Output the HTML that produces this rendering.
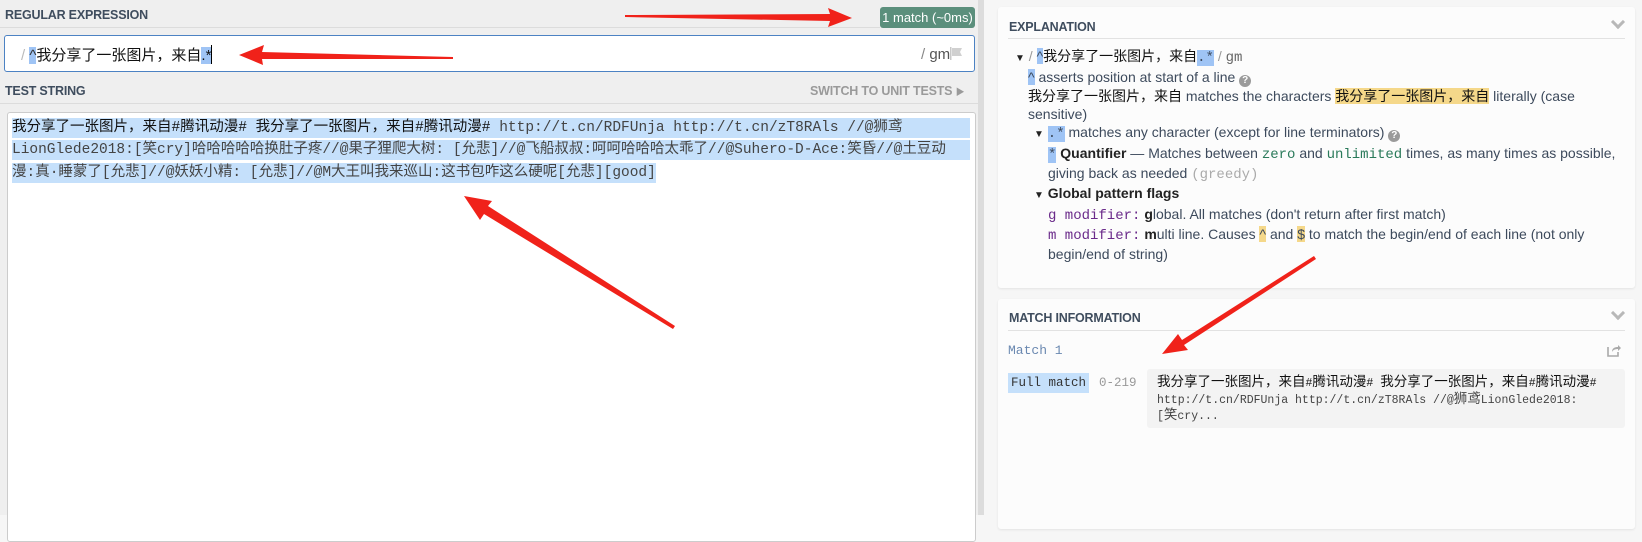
<!DOCTYPE html>
<html><head><meta charset="utf-8">
<style>
*{margin:0;padding:0;box-sizing:border-box}
body{width:1642px;height:515px;overflow:hidden;position:relative;background:#f6f6f6;font-family:"Liberation Sans","Noto Sans CJK SC",sans-serif}
.abs{position:absolute;white-space:nowrap}
.left{position:absolute;left:0;top:0;width:984px;height:515px;background:#efefef;border-right:6px solid #dcdcdc}
.lbl{font-weight:bold;font-size:12.5px;color:#3f4d5e;letter-spacing:-0.2px}
.mono{font-family:"Liberation Mono","Noto Sans CJK SC",monospace}
.hl{background:#c5e0fb}
.card{position:absolute;background:#fcfcfc;border-radius:3px;box-shadow:0 1px 2px rgba(0,0,0,.08)}
.ex{font-size:14px;color:#3d4a5c;line-height:18px}
.cj{color:#111}
.blue{background:#9fc4f5}
.yel{background:#f5d88a}
.q{display:inline-block;width:12px;height:12px;border-radius:50%;background:#9a9a9a;color:#fff;font-size:10px;line-height:12px;text-align:center;font-weight:bold;vertical-align:-1px}
.chev{position:absolute;width:10px;height:10px;border-right:3px solid #b8b8b8;border-bottom:3px solid #b8b8b8;transform:rotate(45deg)}
.c{font-size:13.5px}
</style></head><body>
<div class="left"></div>
<div class="abs lbl" style="left:5px;top:8px">REGULAR EXPRESSION</div>
<div class="abs" style="left:0;top:27px;width:880px;height:1px;background:#dcdcdc"></div>
<div class="abs" style="left:880px;top:7px;width:95px;height:21px;background:#5b8f7c;border-radius:3px;color:#fff;font-size:13px;line-height:21px;text-align:center">1 match (~0ms)</div>
<div class="abs" style="left:4px;top:35px;width:971px;height:37px;background:#fff;border:1px solid #4c82c3;border-radius:3px"></div>
<div class="abs" style="left:21px;top:45px;font-size:15px;line-height:20px;color:#111"><span style="color:#bbb">/</span> <span class="blue" style="color:#333">^</span>我分享了一张图片，来自<span class="blue">.*</span><span style="display:inline-block;width:1px;height:19px;background:#000;vertical-align:-4px"></span></div>
<div class="abs" style="left:921px;top:45px;font-size:15px;line-height:20px;color:#888">/ <span style="color:#555">gm</span></div>
<svg class="abs" style="left:950px;top:47px" width="13" height="13"><rect x="0" y="0" width="1.5" height="13" fill="#c8c8c8"/><path d="M2 1h10l-2 4 2 4H2z" fill="#d0d0d0"/></svg>
<div class="abs lbl" style="left:5px;top:84px">TEST STRING</div>
<div class="abs lbl" style="left:810px;top:84px;color:#9a9a9a">SWITCH TO UNIT TESTS <span style="font-size:9px">▶</span></div>
<div class="abs" style="left:0;top:103px;width:984px;height:1px;background:#dcdcdc"></div>
<div class="abs" style="left:7px;top:112px;width:969px;height:430px;background:#fff;border:1px solid #ccc;border-radius:3px"></div>
<div class="abs mono" style="left:12px;top:118px;font-size:14.5px;line-height:22px;color:#444">
<div class="hl" style="width:958px;height:20px;line-height:20px;margin-bottom:2px;overflow:hidden"><span style="color:#111">我分享了一张图片，来自#腾讯动漫# 我分享了一张图片，来自#腾讯动漫#</span> http://t.cn/RDFUnja http://t.cn/zT8RAls //@狮鸢</div>
<div class="hl" style="width:958px;height:20px;line-height:20px;margin-bottom:2px;overflow:hidden">LionGlede2018:[笑cry]哈哈哈哈哈换肚子疼//@果子狸爬大树: [允悲]//@飞船叔叔:呵呵哈哈哈太乖了//@Suhero-D-Ace:笑昏//@土豆动</div>
<div><span class="hl" style="display:inline-block;height:20px;line-height:20px">漫:真·睡蒙了[允悲]//@妖妖小精: [允悲]//@M大王叫我来巡山:这书包咋这么硬呢[允悲][good]</span></div>
</div>

<div class="card" style="left:998px;top:7px;width:637px;height:281px"></div>
<div class="abs lbl" style="left:1009px;top:20px">EXPLANATION</div>
<div class="chev" style="left:1613px;top:17px"></div>
<div class="abs" style="left:1008px;top:38px;width:617px;height:1px;background:#e2e2e2"></div>
<div class="abs ex" style="left:1015px;top:47px">
<div><span style="font-size:10px;color:#222">▼</span> <span style="color:#999">/</span> <span class="blue">^</span><span class="cj">我分享了一张图片，来自</span><span class="blue mono">.*</span> <span style="color:#999">/</span> <span class="mono" style="color:#666">gm</span></div>
<div style="padding-left:13px"><span class="blue">^</span> asserts position at start of a line <span class="q">?</span></div>
<div style="padding-left:13px"><span class="cj">我分享了一张图片，来自</span> matches the characters <span class="yel cj">我分享了一张图片，来自</span> literally (case</div>
<div style="padding-left:13px">sensitive)</div>
<div style="padding-left:19px"><span style="font-size:10px;color:#222">▼</span> <span class="blue mono">.*</span> matches any character (except for line terminators) <span class="q">?</span></div>
<div style="padding-left:33px"><span class="blue mono">*</span> <b style="color:#222">Quantifier</b> — Matches between <span class="mono" style="color:#2a7a5a">zero</span> and <span class="mono" style="color:#2a7a5a">unlimited</span> times, as many times as possible,</div>
<div style="padding-left:33px">giving back as needed <span class="mono" style="color:#aaa">(greedy)</span></div>
<div style="padding-left:19px"><span style="font-size:10px;color:#222">▼</span> <b style="color:#222">Global pattern flags</b></div>
<div style="padding-left:33px"><span class="mono" style="color:#6a2a8a">g modifier:</span> <b style="color:#222">g</b>lobal. All matches (don't return after first match)</div>
<div style="padding-left:33px"><span class="mono" style="color:#6a2a8a">m modifier:</span> <b style="color:#222">m</b>ulti line. Causes <span class="yel">^</span> and <span class="yel">$</span> to match the begin/end of each line (not only</div>
<div style="padding-left:33px">begin/end of string)</div>
</div>

<div class="card" style="left:998px;top:299px;width:637px;height:230px"></div>
<div class="abs lbl" style="left:1009px;top:311px">MATCH INFORMATION</div>
<div class="chev" style="left:1613px;top:308px"></div>
<div class="abs" style="left:1008px;top:330px;width:617px;height:1px;background:#e2e2e2"></div>
<div class="abs mono" style="left:1008px;top:343px;font-size:13px;color:#6a88b0;line-height:16px">Match 1</div>
<svg class="abs" style="left:1607px;top:343px" width="14" height="14"><path d="M1 4v9h10V9" fill="none" stroke="#aaa" stroke-width="1.6"/><path d="M5 9c0-4 3-5 6-5V2l3 3-3 3V6c-3 0-5 1-6 3z" fill="#aaa"/></svg>
<div class="abs mono hl" style="left:1008px;top:373px;width:81px;height:20px;font-size:12.5px;line-height:20px;color:#333;text-align:center">Full match</div>
<div class="abs mono" style="left:1099px;top:373px;font-size:12.5px;line-height:20px;color:#999">0-219</div>
<div class="abs" style="left:1147px;top:369px;width:478px;height:59px;background:#f3f3f3;border-radius:3px"></div>
<div class="abs mono" style="left:1157px;top:376px;font-size:11.5px;line-height:16.5px;color:#444">
<div style="color:#111"><span class="c">我分享了一张图片，来自</span>#<span class="c">腾讯动漫</span># <span class="c">我分享了一张图片，来自</span>#<span class="c">腾讯动漫</span>#</div>
<div>http://t.cn/RDFUnja http://t.cn/zT8RAls //@<span class="c">狮鸢</span>LionGlede2018:</div>
<div>[<span class="c">笑</span>cry...</div>
</div>

<svg class="abs" style="left:0;top:0" width="1642" height="515">
<g fill="#f0221a">
<polygon points="625,15 830,14 828,8 852,18 828,27 830,21 625,17"/>
<polygon points="453,57 262,52 264,45 239,55 263,65 262,59 453,59"/>
<polygon points="675,326 488,206 492,201 464,196 480,220 484,214 673,329"/>
<polygon points="1314,256 1182,340 1178,334 1162,354 1188,350 1184,345 1316,259"/>
</g>
</svg>
</body></html>
